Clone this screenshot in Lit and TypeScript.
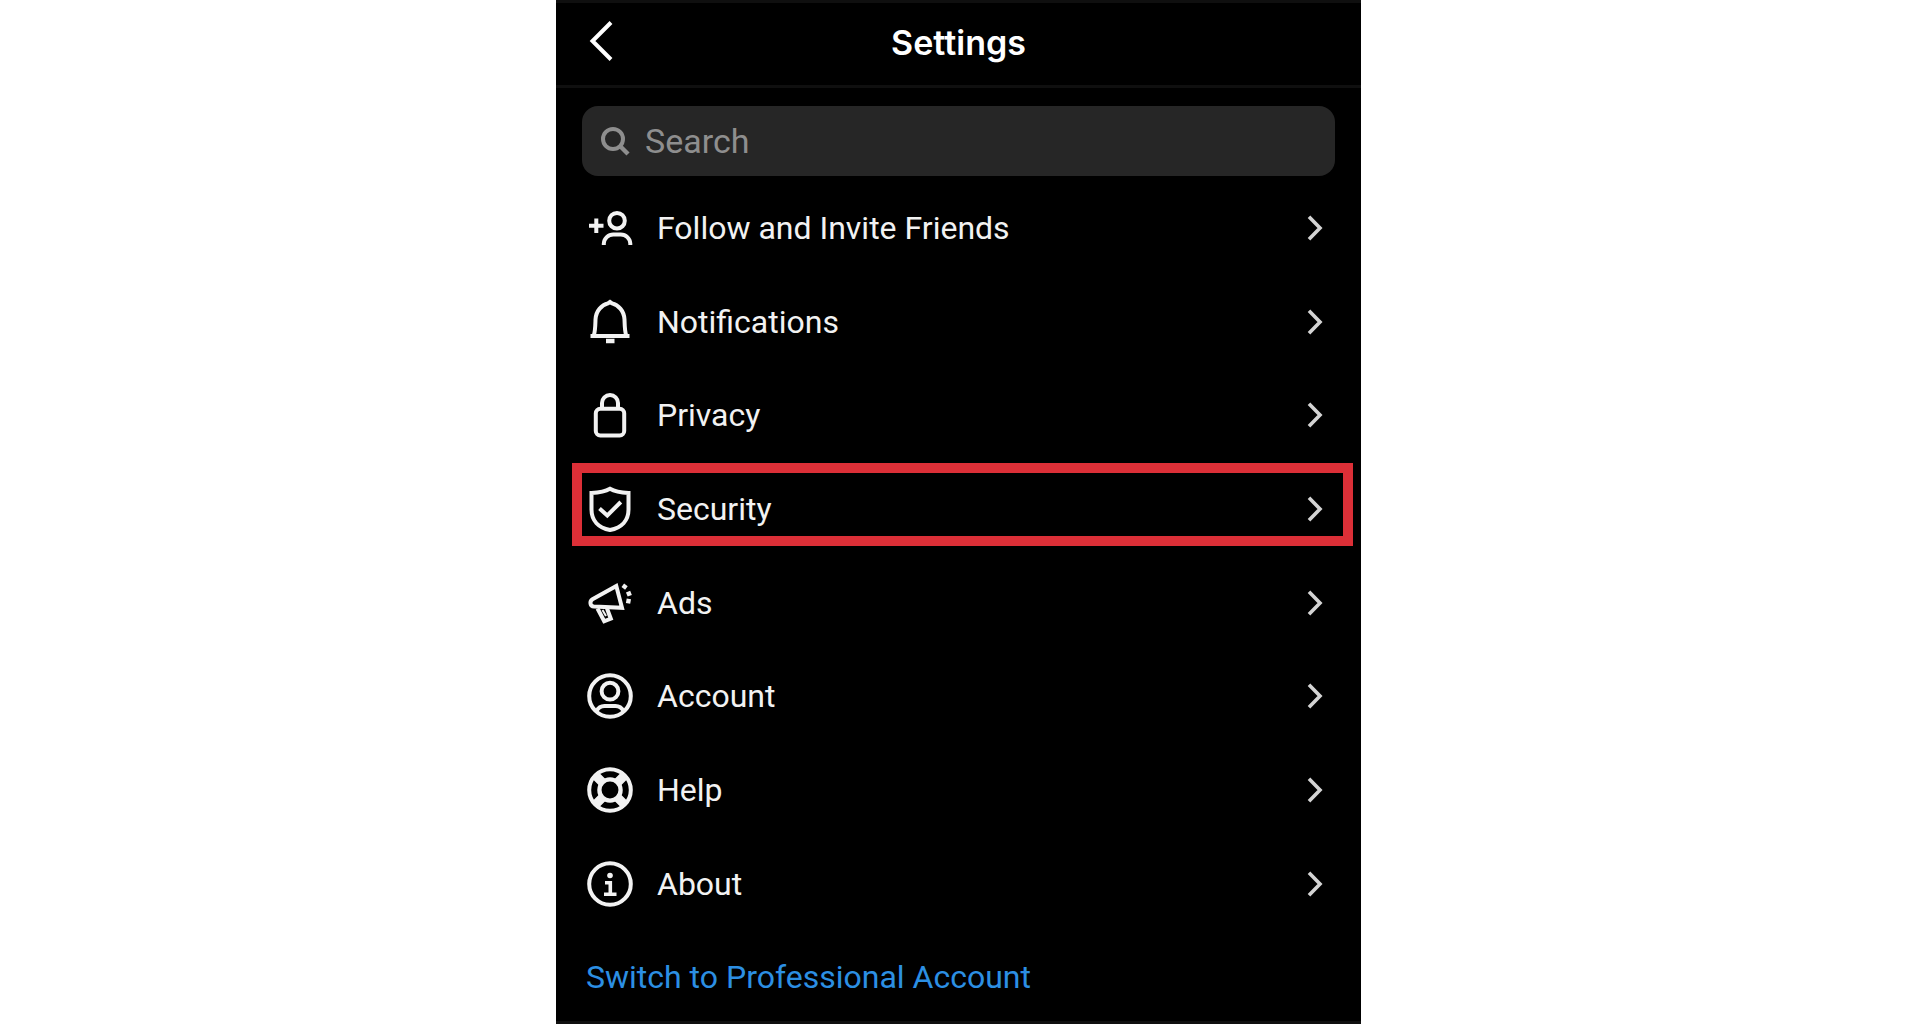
import { LitElement, html, css, svg, SVGTemplateResult } from "lit";
import { customElement } from "lit/decorators.js";

interface Item {
  label: string;
  icon: SVGTemplateResult;
  highlighted?: boolean;
}

const items: Item[] = [
  {
    label: "Follow and Invite Friends",
    icon: svg`<circle cx="31" cy="16.7" r="7.8"/><path d="M10.300 14.500v14.500M3 21.700h14.500"/><path d="M17.800 41v-1.500a9.500 9.500 0 0 1 9.500-9h7.500a9.500 9.500 0 0 1 9.500 9V41"/>`,
  },
  {
    label: "Notifications",
    icon: svg`<path d="M4.500 38h39"/><path d="M7.800 37.500C9.300 33 9.300 28 9.500 21.500 9.900 12.500 16 6.800 22 5.400L24 4l2 1.400c6 1.400 12.100 7.100 12.500 16.100.2 6.500.2 11.500 1.700 16"/><path d="M20 43h8.500" stroke-width="4.500"/>`,
  },
  {
    label: "Privacy",
    icon: svg`<rect x="9.800" y="17.800" width="28.400" height="26.700" rx="4.500"/><path d="M16 17.500V12a8 8 0 0 1 16 0v5.500"/>`,
  },
  {
    label: "Security",
    highlighted: true,
    icon: svg`<path d="M24 3.800c4.500 2.700 10.500 3.900 18.500 4.200v16.500C42.500 35.500 35.500 42.800 24 45 12.500 42.800 5.500 35.500 5.500 24.500V8C13.500 7.700 19.500 6.500 24 3.800Z"/><path d="M13.500 23.500l7.800 7L34.800 17"/>`,
  },
  {
    label: "Ads",
    icon: svg`<path d="M30.300 7L6.500 20.300c-3.200 2-2.600 7 1.500 7.300l28 1.200Z"/><path d="M11.500 29.500l6.700 12.800 6.600-2.600L21 29.500"/><path d="M16.500 31l3.500 6" stroke-width="2"/><path d="M37.300 9.300l2.600-3.400M40.800 15.500l4.200-1.700M40.300 21.700l4.300.8" stroke-width="4.500"/>`,
  },
  {
    label: "Account",
    icon: svg`<circle cx="24" cy="24" r="20.800"/><circle cx="24" cy="19.200" r="8.400"/><path d="M10.500 39c2-3.800 4.500-5 8-5h11c3.500 0 6 1.200 8 5"/>`,
  },
  {
    label: "Help",
    icon: svg`<circle cx="24" cy="24" r="20.800"/><circle cx="24" cy="24" r="10.600" stroke-width="4.300"/><path d="M10 10l6.500 6.500M38 10l-6.500 6.500M10 38l6.500-6.500M38 38l-6.500-6.500" stroke-width="9"/>`,
  },
  {
    label: "About",
    icon: svg`<circle cx="24" cy="24" r="20.800"/><circle cx="24" cy="15.500" r="2.800" fill="currentColor" stroke="none"/><path d="M19 22.800h5.300v11M18 34.300h12.500" stroke-width="3.600"/>`,
  },
];

@customElement("app-root")
export class AppRoot extends LitElement {
  static styles = css`
    :host {
      display: grid;
      grid-template-columns: 556fr 805fr 559fr;
      min-height: 100vh;
      background: #fff;
      font-family: Roboto, "Liberation Sans", sans-serif;
      font-size: 32px;
      color: #f2f2f2;
    }
    * {
      box-sizing: border-box;
    }
    .panel {
      grid-column: 2;
      display: flex;
      flex-direction: column;
      padding-top: 3px;
      background: #000;
      box-shadow: inset 0 3px #0f0f0f, inset 0 -3px #0f0f0f;
    }
    .header {
      display: grid;
      grid-template-columns: 80px 1fr 80px;
      align-items: center;
      height: 85px;
      padding-bottom: 2px;
      border-bottom: 3px solid #0f0f0f;
    }
    .title {
      margin: 0;
      font-family: Inter, sans-serif;
      font-size: 34px;
      line-height: 40px;
      font-weight: 600;
      text-align: center;
      color: #fff;
    }
    .back {
      display: flex;
      padding: 0 0 5px 30px;
      border: 0;
      background: none;
      color: #fff;
    }
    .stroke {
      display: block;
      flex: none;
      fill: none;
      stroke: currentColor;
      stroke-width: 4;
    }
    .search {
      display: flex;
      align-items: center;
      gap: 15px;
      height: 70px;
      margin: 18px 26px 5px;
      padding: 0 18px;
      border-radius: 16px;
      background: #262626;
      color: #8e8e8e;
    }
    .field {
      flex: 1;
      min-width: 0;
      padding: 0;
      border: 0;
      outline: 0;
      background: none;
      font: inherit;
      font-size: 34px;
      color: inherit;
    }
    .field::placeholder {
      color: inherit;
      opacity: 1;
    }
    .nav {
      flex: 1;
      display: flex;
      flex-direction: column;
    }
    .list {
      flex: 8;
      display: flex;
      flex-direction: column;
      margin: 0;
      padding: 0;
      list-style: none;
    }
    .item {
      position: relative;
      flex: 1;
      display: flex;
    }
    .row {
      flex: 1;
      display: flex;
      align-items: center;
      gap: 23px;
      padding: 0 36px 0 30px;
      color: inherit;
      text-decoration: none;
    }
    .label {
      flex: 1;
    }
    .chevron {
      color: #d4d4d4;
    }
    .highlight {
      position: absolute;
      inset: 1px 8px 10px 16px;
      border: 10px solid #dc2f37;
      pointer-events: none;
    }
    .switch {
      flex: 1;
      display: flex;
      align-items: center;
      padding: 0 30px;
      color: #2c8fe3;
      text-decoration: none;
    }
  `;

  private renderItem(item: Item) {
    return html`
      <li class="item">
        <a class="row" href="#">
          <svg class="stroke" width="48" height="48" viewBox="0 0 48 48" aria-hidden="true">${item.icon}</svg>
          <span class="label">${item.label}</span>
          <svg class="stroke chevron" width="20" height="30" viewBox="0 0 20 30" aria-hidden="true">
            <path d="M4 3.800L15 15 4 26.200" stroke-width="3.600" />
          </svg>
        </a>
        ${item.highlighted ? html`<span class="highlight"></span>` : null}
      </li>
    `;
  }

  render() {
    return html`
      <main class="panel">
        <header class="header">
          <button class="back" aria-label="Back">
            <svg class="stroke" width="30" height="44" viewBox="0 0 30 44" aria-hidden="true">
              <path d="M25 3.500L6.500 22 25 40.500" />
            </svg>
          </button>
          <h1 class="title">Settings</h1>
        </header>
        <label class="search">
          <svg class="stroke" width="30" height="30" viewBox="0 0 30 30" aria-hidden="true">
            <circle cx="13" cy="13" r="10" /><path d="M20 20l8 8" stroke-width="4.500" />
          </svg>
          <input class="field" type="search" placeholder="Search" aria-label="Search" />
        </label>
        <nav class="nav">
          <ul class="list">
            ${items.map((item) => this.renderItem(item))}
          </ul>
          <a class="switch" href="#">Switch to Professional Account</a>
        </nav>
      </main>
    `;
  }
}
